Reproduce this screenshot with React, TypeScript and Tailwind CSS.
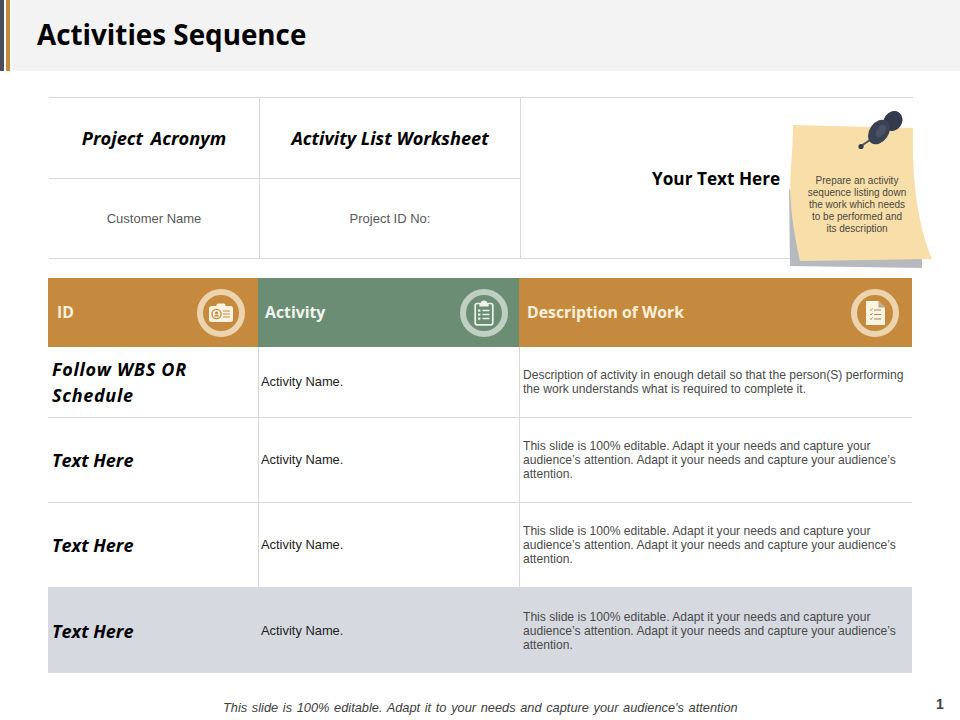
import React from "react";

const head = "font-['Open_Sans',sans-serif]";
const body = "font-['Liberation_Sans',Arial,sans-serif]";

function Ring({ children, ring }: { children: React.ReactNode; ring: string }) {
  return (
    <div className={`w-12 h-12 rounded-full border-[6px] flex items-center justify-center shrink-0 ${ring}`}>
      {children}
    </div>
  );
}

function BadgeIcon() {
  return (
    <svg width="26" height="20" viewBox="0 0 26 20">
      <rect x="8.5" y="0.5" width="9" height="4" rx="1.5" fill="#fdf3e1" />
      <rect x="1" y="3" width="24" height="16" rx="2.5" fill="#fdf3e1" />
      <circle cx="8.5" cy="11" r="4.6" fill="none" stroke="#c68a3e" strokeWidth="1.4" />
      <circle cx="8.5" cy="10" r="1.6" fill="#c68a3e" />
      <path d="M5.6 13.6c1-2 4.8-2 5.8 0z" fill="#c68a3e" />
      <path d="M15 8h7M15 11h7M15 14h7" stroke="#c68a3e" strokeWidth="1.2" />
    </svg>
  );
}

function ClipboardIcon() {
  return (
    <svg width="20" height="26" viewBox="0 0 20 26">
      <rect x="1.2" y="3.5" width="17.6" height="21.3" rx="2" fill="none" stroke="#eef3ee" strokeWidth="1.7" />
      <path d="M7 3.5V2.6a3 2 0 0 1 6 0v.9h1.6v3H5.4v-3z" fill="#eef3ee" />
      <path d="M8.5 10.5h7M8.5 14.5h7M8.5 18.5h7" stroke="#eef3ee" strokeWidth="1.4" />
      <rect x="4" y="9.5" width="2.4" height="2.2" fill="#eef3ee" />
      <rect x="4" y="13.5" width="2.4" height="2.2" fill="#eef3ee" />
      <rect x="4" y="17.5" width="2.4" height="2.2" fill="#eef3ee" />
    </svg>
  );
}

function DocIcon() {
  return (
    <svg width="19" height="24" viewBox="0 0 19 24">
      <path d="M0 0h12.5L19 6.5V24H0z" fill="#fdf3e1" />
      <path d="M12.5 0v6.5H19z" fill="#b9a98d" />
      <path d="M4 8.5l1 1 1.5-2M4 13l1 1 1.5-2M4 17.5l1 1 1.5-2" fill="none" stroke="#8f8a4a" strokeWidth="0.9" />
      <path d="M8 9h7M8 13.5h7M8 18h7" stroke="#9a8b6c" strokeWidth="1.1" />
    </svg>
  );
}

function StickyNote() {
  return (
    <div className="absolute left-[785px] top-[108px] w-[150px] h-[162px]">
      <svg className="absolute inset-0" width="150" height="162" viewBox="0 0 150 162">
        <path d="M4 80L5 158L137 160V150L20 120z" fill="#b6b9be" />
        <path d="M8 17L128 20C127 60 130 110 147 151L15 153C8 120 3 90 6 60C7 45 8 30 8 17z" fill="#f8dfa9" />
        <path d="M76 38L88 30" stroke="#4a4f5c" strokeWidth="1.8" />
        <circle cx="76" cy="38.5" r="2.6" fill="#333a4a" />
        <ellipse cx="108" cy="13" rx="9" ry="10.5" transform="rotate(35 108 13)" fill="#343b4e" />
        <path d="M99 14L106 20L100 28L92 21z" fill="#232836" />
        <ellipse cx="94" cy="24" rx="9.5" ry="13.5" transform="rotate(35 94 24)" fill="#3a4154" />
        <ellipse cx="96" cy="23" rx="4" ry="7" transform="rotate(35 96 23)" fill="#4a5266" />
      </svg>
      <p className={`absolute left-[2px] top-[67px] w-[140px] text-center text-[10px] leading-[12px] text-[#4a463d] ${body}`}>
        Prepare an activity<br />sequence listing down<br />the work which needs<br />to be performed and<br />its description
      </p>
    </div>
  );
}

const editable =
  "This slide is 100% editable. Adapt it your needs and capture your audience’s attention. Adapt it your needs and capture your audience’s attention.";

const rows = [
  {
    h: "h-[71px]",
    id: "Follow WBS OR Schedule",
    idc: "tracking-[0.7px]",
    desc: "Description of activity in enough detail so that the person(S) performing the work understands what is required to complete it.",
    bg: "",
  },
  { h: "h-[85px]", id: "Text Here", idc: "", desc: editable, bg: "" },
  { h: "h-[85px]", id: "Text Here", idc: "", desc: editable, bg: "" },
  { h: "h-[85px]", id: "Text Here", idc: "", desc: editable, bg: "bg-[#d6d9e0]" },
];

export default function App() {
  return (
    <div className="relative w-[960px] h-[720px] bg-white overflow-hidden">
      <header className="h-[71px] bg-[#f3f3f3] flex items-stretch">
        <div className="w-[4px] bg-[#4a4d5c]" />
        <div className="w-[2px] bg-white" />
        <div className="w-[4px] bg-[#c68a3e]" />
        <div className="w-[2px] bg-white opacity-60" />
        <h1 className={`ml-[25px] mt-[14px] text-[27.8px] leading-[40px] font-bold text-black ${head}`}>
          Activities Sequence
        </h1>
      </header>

      <div className="ml-[49px] mt-[26px] w-[864px] h-[162px] grid grid-cols-[211px_261px_392px] grid-rows-[81px_79px] border-y border-[#d9d9d9]">
        <div className={`flex items-center justify-center pt-[1px] border-b border-r border-[#d9d9d9] text-[18.2px] font-bold italic text-black ${head}`}>
          <span className="[word-spacing:3px]">Project Acronym</span>
        </div>
        <div className={`flex items-center justify-center pt-[1px] border-b border-r border-[#d9d9d9] text-[18.2px] font-bold italic text-black ${head}`}>
          Activity List Worksheet
        </div>
        <div className={`row-span-2 flex items-center pl-[131px] pt-[1px] text-[17.2px] font-bold text-black ${head}`}>
          Your Text Here
        </div>
        <div className={`flex items-center justify-center border-r border-[#d9d9d9] text-[13px] text-[#595959] ${body}`}>
          Customer Name
        </div>
        <div className={`flex items-center justify-center border-r border-[#d9d9d9] text-[13px] text-[#595959] ${body}`}>
          Project ID No:
        </div>
      </div>

      <div className="ml-[48px] mt-[19px] w-[864px]">
        <div className={`grid grid-cols-[210px_261px_393px] h-[69px] text-[15.8px] font-bold text-[#fdf1dc] ${head}`}>
          <div className="bg-[#c68a3e] flex items-center justify-between pl-[9px] pr-[13px]">
            <span>ID</span>
            <Ring ring="border-[#edd4ae]"><BadgeIcon /></Ring>
          </div>
          <div className="bg-[#6b8d74] flex items-center justify-between pl-[7px] pr-[11px]">
            <span className="text-[#f0f5f0]">Activity</span>
            <Ring ring="border-[#bfd0c3]"><ClipboardIcon /></Ring>
          </div>
          <div className="bg-[#c68a3e] flex items-center justify-between pl-[8px] pr-[13px]">
            <span>Description of Work</span>
            <Ring ring="border-[#edd4ae]"><DocIcon /></Ring>
          </div>
        </div>

        {rows.map((r, i) => (
          <div
            key={i}
            className={`grid grid-cols-[210px_261px_393px] ${r.h} ${r.bg} ${i < 3 ? "border-b border-[#d9d9d9]" : ""}`}
          >
            <div className={`flex items-center pl-[4px] pr-[20px] text-[18px] leading-[26px] font-bold italic text-black ${head} ${r.idc}`}>
              {r.id}
            </div>
            <div className={`flex items-center pl-[2px] border-l border-[#d9d9d9] text-[12.9px] text-[#222] ${body}`}>
              Activity Name.
            </div>
            <div className={`flex items-center pl-[3px] pr-[6px] border-l border-[#d9d9d9] text-[12.1px] leading-[14px] text-[#4a4a4a] ${body}`}>
              <p>{r.desc}</p>
            </div>
          </div>
        ))}
      </div>

      <StickyNote />

      <footer className={`absolute left-0 right-0 top-[700px] flex ${body}`}>
        <p className="ml-[223px] text-[12.8px] leading-[16px] italic text-[#404040] [word-spacing:1.1px]">
          This slide is 100% editable. Adapt it to your needs and capture your audience's attention
        </p>
        <span className="absolute left-[936px] top-[-4px] text-[14px] font-bold leading-[16px] text-[#404040]">1</span>
      </footer>
    </div>
  );
}
